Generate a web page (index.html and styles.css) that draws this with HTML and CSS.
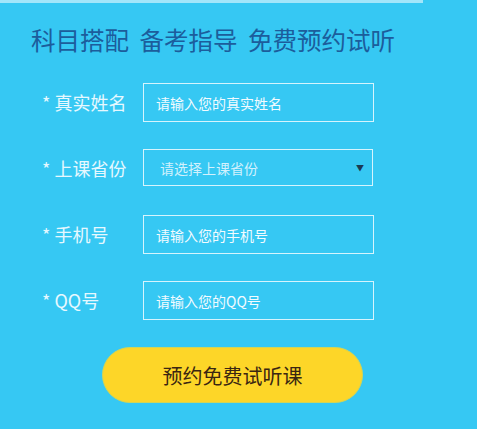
FILE: index.html
```html
<!DOCTYPE html>
<html lang="zh-CN">
<head>
    <meta charset="UTF-8">
    <meta name="viewport" content="width=device-width, initial-scale=1.0">
    <title>免费预约试听</title>
    <link rel="stylesheet" href="styles.css">
</head>
<body>
    <div class="top-line"></div>
    <h2 class="title">科目搭配 备考指导 免费预约试听</h2>
    <form class="form" action="">
        <div class="row">
            <label class="label" for="name">* 真实姓名</label>
            <input class="field" type="text" id="name" placeholder="请输入您的真实姓名">
        </div>
        <div class="row">
            <label class="label" for="province">* 上课省份</label>
            <div class="select-wrap">
                <select class="field select" id="province">
                    <option>请选择上课省份</option>
                </select>
            </div>
        </div>
        <div class="row">
            <label class="label" for="phone">* 手机号</label>
            <input class="field" type="text" id="phone" placeholder="请输入您的手机号">
        </div>
        <div class="row">
            <label class="label" for="qq">* QQ号</label>
            <input class="field" type="text" id="qq" placeholder="请输入您的QQ号">
        </div>
        <button type="button" class="button">预约免费试听课</button>
    </form>
</body>
</html>
```

FILE: styles.css
```css
* {
    margin: 0;
    padding: 0;
    box-sizing: border-box;
}
body {
    background-color: #36c8f3;
    font-family: "Noto Sans CJK SC", "Noto Sans", sans-serif;
    width: 477px;
    height: 429px;
    overflow: hidden;
}
.top-line {
    width: 423px;
    height: 3px;
    background-color: #a3e6fa;
}
.title {
    margin: 20px 0 0 31px;
    font-size: 24.5px;
    line-height: 34px;
    font-weight: 400;
    word-spacing: 5px;
    color: #1c5d9c;
}
.form {
    margin-top: 26px;
}
.row {
    display: flex;
    align-items: flex-start;
    height: 39px;
    margin-bottom: 27px;
}
.label {
    width: 101px;
    margin-left: 42px;
    font-size: 18px;
    line-height: 39px;
    color: #e6f8ff;
}
.field {
    width: 231px;
    height: 39px;
    padding-left: 12px;
    border: 1px solid #d6f4fd;
    background-color: transparent;
    font-family: "Noto Sans CJK SC", sans-serif;
    font-size: 14px;
    color: #ffffff;
    outline: none;
}
.field::placeholder {
    color: #f2fbff;
}
.select-wrap {
    position: relative;
}
.select {
    appearance: none;
    -webkit-appearance: none;
    width: 230px;
    height: 37px;
    padding-left: 16px;
    color: #d2f1fd;
}
.select-wrap::after {
    content: "▼";
    position: absolute;
    top: 13px;
    right: 9px;
    font-size: 8px;
    color: #1b3a52;
}
.button {
    display: block;
    margin-left: 102px;
    width: 261px;
    height: 56px;
    border: 1px solid #cfd55a;
    border-radius: 28px;
    background-color: #fdd628;
    font-family: "Noto Sans CJK SC", sans-serif;
    font-size: 20px;
    color: #3a2612;
    cursor: pointer;
}
```
